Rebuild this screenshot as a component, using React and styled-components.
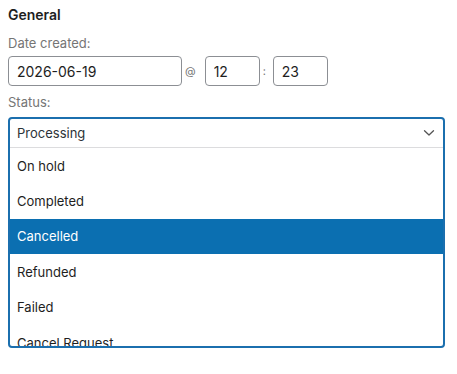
import styled, { createGlobalStyle } from "styled-components";

const GlobalStyle = createGlobalStyle`
  html, body {
    margin: 0;
    background: #ffffff;
  }
  body {
    font-family: Inter, "Noto Sans", sans-serif;
    color: #1e1e1e;
  }
`;

const options = [
  "On hold",
  "Completed",
  "Cancelled",
  "Refunded",
  "Failed",
  "Cancel Request",
];

export default function App() {
  const selected = "Cancelled";

  return (
    <>
      <GlobalStyle />
      <Panel>
        <Heading>General</Heading>
        <Label>Date created:</Label>
        <DateRow>
          <TextInput $width={174} defaultValue="2026-06-19" />
          <Sep $left={3} $right={9}>@</Sep>
          <TextInput $width={55} defaultValue="12" />
          <Sep $left={3} $right={7}>:</Sep>
          <TextInput $width={55} defaultValue="23" />
        </DateRow>
        <Label $top={6}>Status:</Label>
        <Select>
          <SelectHead>
            <span>Processing</span>
            <svg width="12" height="8" viewBox="0 0 12 8" fill="none">
              <path
                d="M1.5 1.8 L6 6 L10.5 1.8"
                stroke="#555"
                strokeWidth="1.3"
                strokeLinecap="round"
                strokeLinejoin="round"
              />
            </svg>
          </SelectHead>
          <OptionList>
            {options.map((o) => (
              <Option key={o} $active={o === selected}>
                {o}
              </Option>
            ))}
          </OptionList>
        </Select>
      </Panel>
    </>
  );
}

const Panel = styled.div`
  width: 437px;
  padding: 5px 12px 0 8px;
  display: flex;
  flex-direction: column;
`;

const Heading = styled.h3`
  margin: 0;
  font-size: 14px;
  line-height: 20px;
  font-weight: 600;
  color: #1e1e1e;
`;

const Label = styled.div`
  margin-top: ${(p) => p.$top ?? 8}px;
  font-size: 13px;
  line-height: 20px;
  color: #757575;
`;

const DateRow = styled.div`
  margin-top: 3px;
  display: flex;
  align-items: center;
`;

const TextInput = styled.input`
  box-sizing: border-box;
  width: ${(p) => p.$width}px;
  height: 30px;
  padding: 0 8px;
  border: 1px solid #8c8f94;
  border-radius: 4px;
  font-family: Inter, "Noto Sans", sans-serif;
  font-size: 14px;
  color: #1e1e1e;
  background: #fff;
  outline: none;
`;

const Sep = styled.span`
  margin: 0 ${(p) => p.$right}px 0 ${(p) => p.$left}px;
  font-size: 11px;
  color: #757575;
`;

const Select = styled.div`
  box-sizing: border-box;
  margin-top: 5px;
  width: 437px;
  height: 231px;
  border: 2px solid #1b6fae;
  border-radius: 4px;
  overflow: hidden;
  display: flex;
  flex-direction: column;
`;

const SelectHead = styled.div`
  flex: none;
  height: 28px;
  padding: 0 8px 0 7px;
  border-bottom: 1px solid #dcdcde;
  display: flex;
  align-items: center;
  justify-content: space-between;
  font-size: 13px;
  color: #2c3338;
`;

const OptionList = styled.ul`
  list-style: none;
  margin: 0;
  padding: 0;
`;

const Option = styled.li`
  height: 35.4px;
  padding: 0 7px;
  display: flex;
  align-items: center;
  font-size: 13px;
  color: ${(p) => (p.$active ? "#ffffff" : "#1e1e1e")};
  background: ${(p) => (p.$active ? "#0b6fb1" : "transparent")};
`;
